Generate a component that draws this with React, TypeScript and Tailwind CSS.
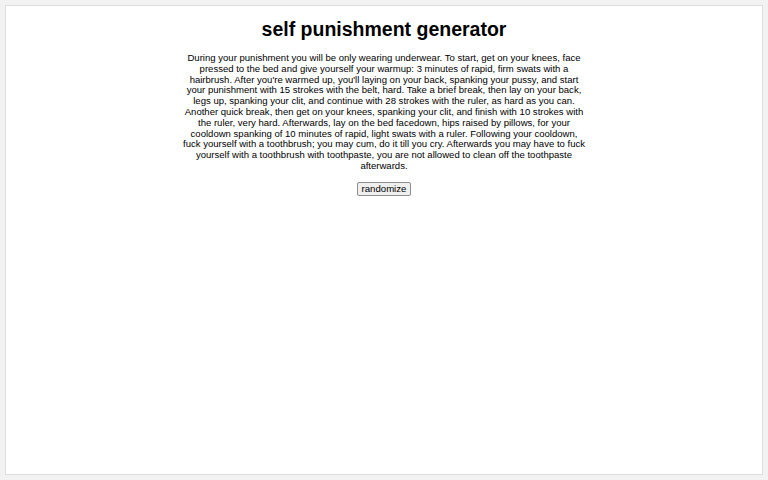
export default function App() {
  return (
    <div className="h-[480px] bg-[#f2f2f2] p-[5px] font-['Liberation_Sans',Arial,sans-serif] text-black">
      <div className="flex h-[470px] flex-col items-center border border-[#dddddd] bg-white pt-[11px]">
        <h1 className="text-[19.5px] font-bold leading-[24px]">self punishment generator</h1>
        <p className="mt-[12px] w-[405px] text-center text-[9.55px] leading-[10.8px]">
          During your punishment you will be only wearing underwear. To start, get on your knees, face pressed to
          the bed and give yourself your warmup: 3 minutes of rapid, firm swats with a hairbrush. After you're warmed
          up, you'll laying on your back, spanking your pussy, and start your punishment with 15 strokes with the
          belt, hard. Take a brief break, then lay on your back, legs up, spanking your clit, and continue with 28
          strokes with the ruler, as hard as you can. Another quick break, then get on your knees, spanking your
          clit, and finish with 10 strokes with the ruler, very hard. Afterwards, lay on the bed facedown, hips
          raised by pillows, for your cooldown spanking of 10 minutes of rapid, light swats with a ruler. Following
          your cooldown, fuck yourself with a toothbrush; you may cum, do it till you cry. Afterwards you may have
          to fuck yourself with a toothbrush with toothpaste, you are not allowed to clean off the toothpaste
          afterwards.
        </p>
        <button className="mt-[10px] rounded-[2px] border border-[#8f8f8f] bg-[#efefef] px-[4px] text-[9.6px] leading-[12px]">
          randomize
        </button>
      </div>
    </div>
  );
}
